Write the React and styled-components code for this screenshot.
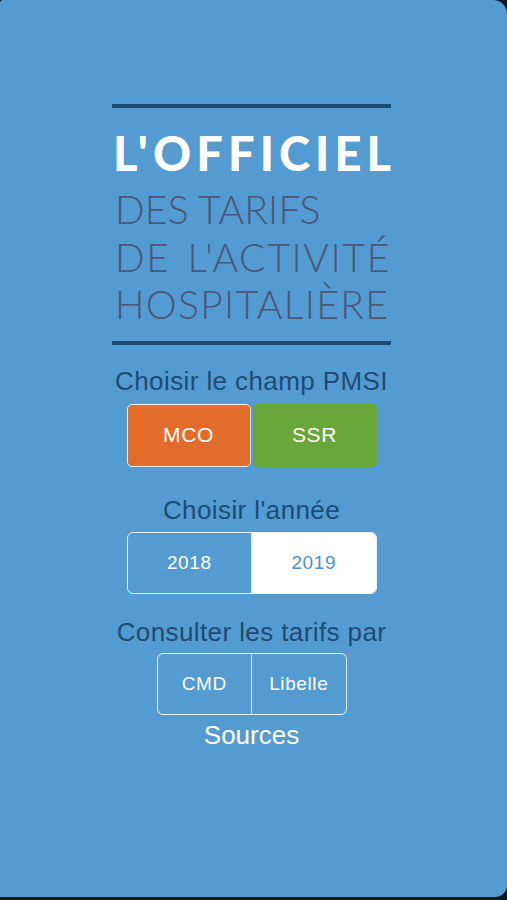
import React, { useState } from "react";
import styled, { createGlobalStyle } from "styled-components";

const GlobalStyle = createGlobalStyle`
  html, body {
    margin: 0;
    padding: 0;
    background: #0c1821;
  }
`;

const App = () => {
  const [field, setField] = useState("MCO");
  const [year, setYear] = useState("2018");

  return (
    <>
      <GlobalStyle />
      <Screen>
        <Logo>
          <Rule />
          <Brand>L'OFFICIEL</Brand>
          <Tagline $spacing="0.2px">DES TARIFS</Tagline>
          <Tagline $spacing="1.7px" $split>
            <span>DE</span>
            <span>L'ACTIVITÉ</span>
          </Tagline>
          <Tagline $spacing="1.35px">HOSPITALIÈRE</Tagline>
          <Rule $gap="12px" />
        </Logo>

        <Heading $gap="21px" $below="8px">Choisir le champ PMSI</Heading>
        <FieldRow>
          <FieldButton
            $color="#e46c2b"
            $active={field === "MCO"}
            onClick={() => setField("MCO")}
          >
            MCO
          </FieldButton>
          <FieldButton
            $color="#6aa73a"
            $active={field === "SSR"}
            onClick={() => setField("SSR")}
          >
            SSR
          </FieldButton>
        </FieldRow>

        <Heading $gap="28px" $below="7px">Choisir l'année</Heading>
        <Segmented $width="250px">
          {["2018", "2019"].map((y) => (
            <Segment key={y} $selected={year !== y} onClick={() => setYear(y)}>
              {y}
            </Segment>
          ))}
        </Segmented>

        <Heading $gap="23px" $below="6px">Consulter les tarifs par</Heading>
        <Segmented $width="190px">
          <Segment>CMD</Segment>
          <Segment>Libelle</Segment>
        </Segmented>

        <SourcesLink>Sources</SourcesLink>
      </Screen>
    </>
  );
};

const Screen = styled.div`
  box-sizing: border-box;
  width: 507px;
  height: 897px;
  background: #539bd0;
  border-radius: 3px 14px 12px 0;
  display: flex;
  flex-direction: column;
  align-items: center;
  padding: 104px 4px 0 0;
  font-family: "Liberation Sans", Arial, sans-serif;
`;

const Logo = styled.div`
  width: 279px;
  display: flex;
  flex-direction: column;
`;

const Rule = styled.div`
  height: 4px;
  background: #1d4a73;
  margin-top: ${(p) => p.$gap || "0"};
`;

const Brand = styled.div`
  font-family: Lato, "Open Sans", sans-serif;
  font-weight: 900;
  font-size: 47px;
  line-height: 47px;
  letter-spacing: 5.1px;
  color: #ffffff;
  margin: 22px 0 9px 1px;
  white-space: nowrap;
`;

const Tagline = styled.div`
  font-family: Lato, "Open Sans", sans-serif;
  font-weight: 300;
  font-size: 39px;
  line-height: 47.5px;
  letter-spacing: ${(p) => p.$spacing || "0"};
  color: #4b5679;
  padding-left: 3px;
  white-space: nowrap;
  display: ${(p) => (p.$split ? "flex" : "block")};
  justify-content: space-between;
`;

const Heading = styled.div`
  font-size: 26px;
  line-height: 30px;
  letter-spacing: 0.4px;
  color: #1f4b74;
  margin-top: ${(p) => p.$gap};
  margin-bottom: ${(p) => p.$below};
`;

const FieldRow = styled.div`
  display: flex;
  gap: 2px;
`;

const FieldButton = styled.button`
  box-sizing: border-box;
  width: 124px;
  height: 63px;
  background: ${(p) => p.$color};
  border: ${(p) => (p.$active ? "1.5px solid #f4efe9" : "none")};
  border-radius: 5px;
  color: #ffffff;
  font-family: "Liberation Sans", Arial, sans-serif;
  font-size: 21px;
  letter-spacing: 0.6px;
  cursor: pointer;
`;

const Segmented = styled.div`
  box-sizing: border-box;
  width: ${(p) => p.$width};
  height: 62px;
  display: flex;
  border: 1.5px solid #eaf3fa;
  border-radius: 6px;
  overflow: hidden;
`;

const Segment = styled.button`
  flex: 1;
  border: none;
  background: ${(p) => (p.$selected ? "#ffffff" : "transparent")};
  color: ${(p) => (p.$selected ? "#4b92c8" : "#ffffff")};
  font-family: "Liberation Sans", Arial, sans-serif;
  font-size: 19px;
  letter-spacing: 0.6px;
  cursor: pointer;
  & + & {
    border-left: 1.5px solid #eaf3fa;
  }
`;

const SourcesLink = styled.div`
  font-size: 26px;
  line-height: 30px;
  color: #ffffff;
  margin-top: 5px;
`;

export default App;
